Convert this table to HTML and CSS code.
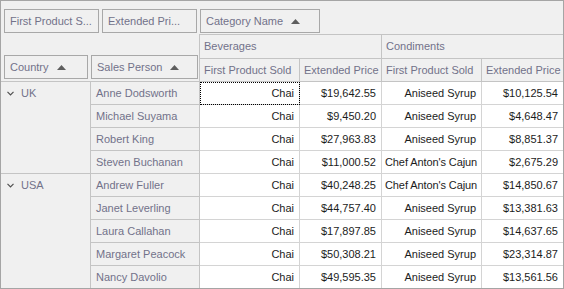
FILE: index.html
```html
<!DOCTYPE html>
<html>
<head>
<meta charset="utf-8">
<link rel="stylesheet" href="styles.css">
</head>
<body>
<div class="pivot">
  <div class="filters">
    <div class="field w95">First Product S...</div>
    <div class="field w95">Extended Pri...</div>
    <div class="field w120">Category Name <svg class="arrow" width="9" height="5" viewBox="0 0 9 5"><path d="M0 5 L4.5 0 L9 5 Z"/></svg></div>
  </div>
  <div class="grid">
    <div class="rowfields">
      <div class="field w84">Country <svg class="arrow" width="9" height="5" viewBox="0 0 9 5"><path d="M0 5 L4.5 0 L9 5 Z"/></svg></div>
      <div class="field w107">Sales Person <svg class="arrow" width="9" height="5" viewBox="0 0 9 5"><path d="M0 5 L4.5 0 L9 5 Z"/></svg></div>
    </div>
    <div class="hdr cat">Beverages</div>
    <div class="hdr cat last">Condiments</div>
    <div class="hdr">First Product Sold</div>
    <div class="hdr">Extended Price</div>
    <div class="hdr">First Product Sold</div>
    <div class="hdr last">Extended Price</div>

    <div class="country span4"><svg class="chev" width="7" height="5" viewBox="0 0 7 5"><path d="M0.5 0.8 L3.5 3.8 L6.5 0.8"/></svg>UK</div>
    <div class="rh">Anne Dodsworth</div><div class="val focus">Chai</div><div class="val">$19,642.55</div><div class="val">Aniseed Syrup</div><div class="val last">$10,125.54</div>
    <div class="rh">Michael Suyama</div><div class="val">Chai</div><div class="val">$9,450.20</div><div class="val">Aniseed Syrup</div><div class="val last">$4,648.47</div>
    <div class="rh">Robert King</div><div class="val">Chai</div><div class="val">$27,963.83</div><div class="val">Aniseed Syrup</div><div class="val last">$8,851.37</div>
    <div class="rh">Steven Buchanan</div><div class="val">Chai</div><div class="val">$11,000.52</div><div class="val clip">Chef Anton's Cajun</div><div class="val last">$2,675.29</div>

    <div class="country span5 bottom"><svg class="chev" width="7" height="5" viewBox="0 0 7 5"><path d="M0.5 0.8 L3.5 3.8 L6.5 0.8"/></svg>USA</div>
    <div class="rh">Andrew Fuller</div><div class="val">Chai</div><div class="val">$40,248.25</div><div class="val clip">Chef Anton's Cajun</div><div class="val last">$14,850.67</div>
    <div class="rh">Janet Leverling</div><div class="val">Chai</div><div class="val">$44,757.40</div><div class="val">Aniseed Syrup</div><div class="val last">$13,381.63</div>
    <div class="rh">Laura Callahan</div><div class="val">Chai</div><div class="val">$17,897.85</div><div class="val">Aniseed Syrup</div><div class="val last">$14,637.65</div>
    <div class="rh">Margaret Peacock</div><div class="val">Chai</div><div class="val">$50,308.21</div><div class="val">Aniseed Syrup</div><div class="val last">$23,314.87</div>
    <div class="rh bottom">Nancy Davolio</div><div class="val bottom">Chai</div><div class="val bottom">$49,595.35</div><div class="val bottom">Aniseed Syrup</div><div class="val last bottom">$13,561.56</div>
  </div>
</div>
</body>
</html>
```

FILE: styles.css
```css
html, body {
  margin: 0;
  padding: 0;
}
body {
  font-family: "Liberation Sans", Arial, sans-serif;
  font-size: 11px;
}
.pivot {
  width: 564px;
  height: 289px;
  box-sizing: border-box;
  border: 1px solid #a5a5a5;
  background: #f0f0f0;
  overflow: hidden;
}
.filters {
  height: 33px;
  box-sizing: border-box;
  padding: 8px 0 0 3px;
  display: flex;
  gap: 3px;
  align-items: flex-start;
}
.field {
  box-sizing: border-box;
  height: 24px;
  border: 1px solid #a8a8a8;
  padding: 0 5px;
  line-height: 22px;
  color: #72728a;
  white-space: nowrap;
  overflow: hidden;
  display: flex;
  align-items: center;
}
.w95 { width: 95px; }
.w120 { width: 120px; }
.w84 { width: 84px; }
.w107 { width: 107px; }
.arrow {
  margin-left: 8px;
  fill: #5e5e5e;
  flex: none;
}
.grid {
  display: grid;
  grid-template-columns: 90px 109px 100px 82px 100px 81px;
  grid-template-rows: 25px 23px repeat(8, 23px) 22px;
}
.grid > div {
  box-sizing: border-box;
  border-right: 1px solid #cfcfcf;
  border-bottom: 1px solid #cfcfcf;
  white-space: nowrap;
  overflow: hidden;
}
.grid > div.last { border-right: none; }
.grid > div.bottom { border-bottom: none; }
.rowfields {
  grid-column: span 2;
  grid-row: span 2;
  display: flex;
  align-items: flex-end;
  gap: 3px;
  padding: 0 0 2px 3px;
  border-color: #c4c4c4 !important;
}
.hdr {
  color: #72728a;
  line-height: 22px;
  padding: 0 4px;
  border-color: #c4c4c4 !important;
}
.hdr.cat {
  grid-column: span 2;
  border-top: 1px solid #c4c4c4;
  line-height: 23px;
}
.country {
  color: #72728a;
  line-height: 22px;
  padding-left: 6px;
  display: flex;
  align-items: flex-start;
  border-color: #c4c4c4 !important;
}
.country .chev {
  fill: none;
  stroke: #505050;
  stroke-width: 1.2;
  margin: 9px 7px 0 0;
}
.span4 { grid-row: span 4; }
.span5 { grid-row: span 5; }
.rh {
  color: #72728a;
  line-height: 22px;
  padding-left: 5px;
  border-color: #c4c4c4 !important;
}
.val {
  background: #fff;
  color: #1c1c1c;
  text-align: right;
  line-height: 22px;
  padding: 0 5px 0 3px;
  border-color: #d4d4d4 !important;
}
.val.clip {
  text-align: left;
  padding-right: 0;
  letter-spacing: -0.1px;
}
.val.focus {
  outline: 1px dotted #000;
  outline-offset: -1px;
}
```
